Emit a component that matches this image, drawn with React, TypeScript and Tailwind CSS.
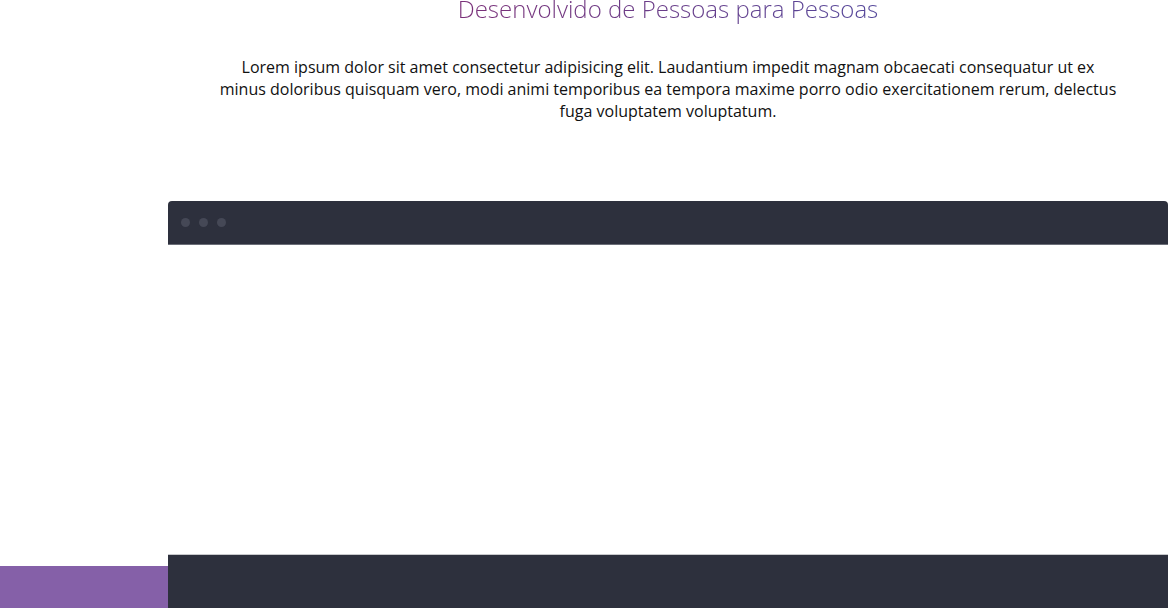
export default function App() {
  return (
    <div className="w-[1168px] h-[608px] overflow-hidden bg-white font-['Open_Sans',sans-serif]">
      <section className="ml-[168px] w-[1000px] flex flex-col items-center">
        <h2 className="mt-[-7px] text-[24px] leading-[32px] font-light bg-gradient-to-r from-[#7a2f78] to-[#54479a] bg-clip-text text-transparent">
          Desenvolvido de Pessoas para Pessoas
        </h2>
        <p className="mt-[31px] w-[900px] text-center text-[16px] leading-[22px] text-[#111]">
          Lorem ipsum dolor sit amet consectetur adipisicing elit. Laudantium impedit magnam obcaecati consequatur ut ex
          minus doloribus quisquam vero, modi animi temporibus ea tempora maxime porro odio exercitationem rerum, delectus
          fuga voluptatem voluptatum.
        </p>
      </section>

      <div className="ml-[168px] mt-[79px] w-[1000px]">
        <div className="h-[44px] bg-[#2d303d] rounded-t-[4px] flex items-center gap-[9px] pl-[13px] border-b border-[#6b6e78]">
          <span className="w-[9px] h-[9px] rounded-full bg-[#454856]" />
          <span className="w-[9px] h-[9px] rounded-full bg-[#454856]" />
          <span className="w-[9px] h-[9px] rounded-full bg-[#454856]" />
        </div>
        <div className="h-[309px] bg-white" />
      </div>

      <div className="flex">
        <div className="w-[168px] mt-[12px] h-[42px] bg-[#8560a8]" />
        <div className="flex-1 h-[54px] bg-[#2d303d] border-t border-[#c8c9cc]" />
      </div>
    </div>
  );
}
